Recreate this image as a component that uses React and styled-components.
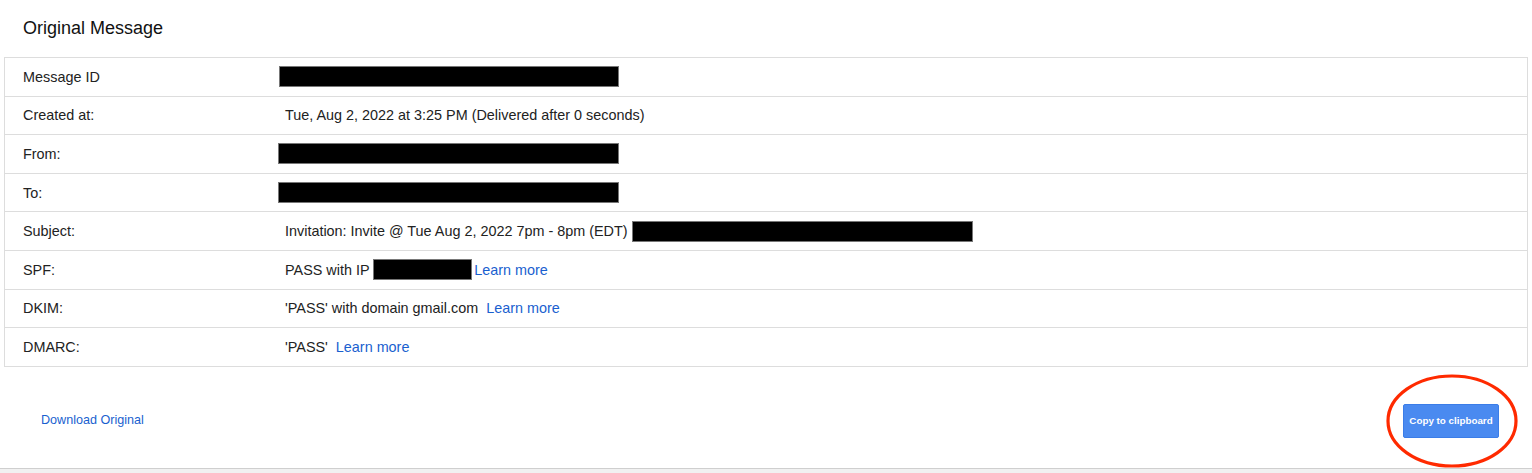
import React from "react";
import styled, { createGlobalStyle } from "styled-components";

const Global = createGlobalStyle`
  html, body { margin: 0; padding: 0; background: #fff; }
  body { font-family: "Liberation Sans", Arial, Helvetica, sans-serif; color: #222; }
`;

const Page = styled.div`
  width: 1532px;
  height: 473px;
  display: flex;
  flex-direction: column;
  overflow: hidden;
`;

const Content = styled.div`
  padding: 0 4px;
  display: flex;
  flex-direction: column;
`;

const Title = styled.h1`
  margin: 0;
  height: 57px;
  display: flex;
  align-items: center;
  padding: 0 0 1px 19px;
  box-sizing: border-box;
  font-size: 18px;
  font-weight: normal;
  color: #111;
`;

const Table = styled.div`
  border: 1px solid #ddd;
  display: flex;
  flex-direction: column;
`;

const Row = styled.div`
  display: grid;
  grid-template-columns: 274px 1fr;
  height: 37.6px;
  align-items: center;
  font-size: 14.4px;
  & + & { border-top: 1px solid #ddd; }
`;

const Label = styled.div`
  padding-left: 18px;
`;

const Value = styled.div`
  padding-left: 6px;
  display: flex;
  align-items: center;
  white-space: pre;
`;

const Redact = styled.span`
  display: inline-block;
  width: ${p => p.$w}px;
  height: 21px;
  background: #000;
  border: 1px solid #777;
  box-sizing: border-box;
  margin-left: ${p => p.$ml || 0}px;
`;

const Link = styled.a`
  color: #1a5fcf;
  text-decoration: none;
  cursor: pointer;
  margin-left: ${p => p.$ml || 0}px;
`;

const Footer = styled.div`
  height: 101px;
  display: flex;
  align-items: center;
  justify-content: space-between;
  padding: 7px 29px 0 37px;
  box-sizing: border-box;
`;

const DownloadLink = styled(Link)`
  font-size: 12.6px;
  margin-top: -1px;
`;

const ButtonWrap = styled.div`
  position: relative;
  display: flex;
`;

const CopyButton = styled.button`
  width: 96px;
  height: 34px;
  background: #4a8af0;
  border: 1px solid #3b7de8;
  border-radius: 2px;
  color: #fff;
  font-family: "Liberation Sans", Arial, sans-serif;
  font-weight: bold;
  font-size: 9.8px;
  padding: 0;
  cursor: pointer;
`;

const Circle = styled.svg`
  position: absolute;
  left: -18px;
  top: -31px;
  width: 134px;
  height: 96px;
  pointer-events: none;
  overflow: visible;
`;

const BottomBar = styled.div`
  flex: 1;
  border-top: 1px solid #cfcfcf;
  background: #f1f1f1;
`;

export default function App() {
  return (
    <Page>
      <Global />
      <Content>
        <Title>Original Message</Title>
        <Table>
          <Row>
            <Label>Message ID</Label>
            <Value><Redact $w={340} $ml={-6} /></Value>
          </Row>
          <Row>
            <Label>Created at:</Label>
            <Value>Tue, Aug 2, 2022 at 3:25 PM (Delivered after 0 seconds)</Value>
          </Row>
          <Row>
            <Label>From:</Label>
            <Value><Redact $w={341} $ml={-7} /></Value>
          </Row>
          <Row>
            <Label>To:</Label>
            <Value><Redact $w={341} $ml={-7} /></Value>
          </Row>
          <Row>
            <Label>Subject:</Label>
            <Value>Invitation: Invite @ Tue Aug 2, 2022 7pm - 8pm (EDT) <Redact $w={341} $ml={0} /></Value>
          </Row>
          <Row>
            <Label>SPF:</Label>
            <Value>PASS with IP <Redact $w={99} $ml={0} /><Link $ml={2}>Learn more</Link></Value>
          </Row>
          <Row>
            <Label>DKIM:</Label>
            <Value>'PASS' with domain gmail.com  <Link>Learn more</Link></Value>
          </Row>
          <Row>
            <Label>DMARC:</Label>
            <Value>'PASS'  <Link>Learn more</Link></Value>
          </Row>
        </Table>
        <Footer>
          <DownloadLink>Download Original</DownloadLink>
          <ButtonWrap>
            <CopyButton>Copy to clipboard</CopyButton>
            <Circle viewBox="0 0 134 96">
              <ellipse cx="67" cy="48" rx="64" ry="45" fill="none" stroke="#ff2a00" strokeWidth="3.2" />
            </Circle>
          </ButtonWrap>
        </Footer>
      </Content>
      <BottomBar />
    </Page>
  );
}
